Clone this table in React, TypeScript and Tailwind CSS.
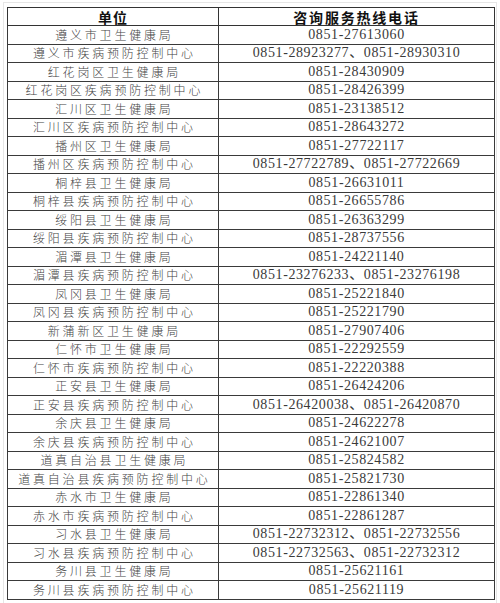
import React from "react";

const rows: [string, string][] = [
  ["遵义市卫生健康局", "0851-27613060"],
  ["遵义市疾病预防控制中心", "0851-28923277、0851-28930310"],
  ["红花岗区卫生健康局", "0851-28430909"],
  ["红花岗区疾病预防控制中心", "0851-28426399"],
  ["汇川区卫生健康局", "0851-23138512"],
  ["汇川区疾病预防控制中心", "0851-28643272"],
  ["播州区卫生健康局", "0851-27722117"],
  ["播州区疾病预防控制中心", "0851-27722789、0851-27722669"],
  ["桐梓县卫生健康局", "0851-26631011"],
  ["桐梓县疾病预防控制中心", "0851-26655786"],
  ["绥阳县卫生健康局", "0851-26363299"],
  ["绥阳县疾病预防控制中心", "0851-28737556"],
  ["湄潭县卫生健康局", "0851-24221140"],
  ["湄潭县疾病预防控制中心", "0851-23276233、0851-23276198"],
  ["凤冈县卫生健康局", "0851-25221840"],
  ["凤冈县疾病预防控制中心", "0851-25221790"],
  ["新蒲新区卫生健康局", "0851-27907406"],
  ["仁怀市卫生健康局", "0851-22292559"],
  ["仁怀市疾病预防控制中心", "0851-22220388"],
  ["正安县卫生健康局", "0851-26424206"],
  ["正安县疾病预防控制中心", "0851-26420038、0851-26420870"],
  ["余庆县卫生健康局", "0851-24622278"],
  ["余庆县疾病预防控制中心", "0851-24621007"],
  ["道真自治县卫生健康局", "0851-25824582"],
  ["道真自治县疾病预防控制中心", "0851-25821730"],
  ["赤水市卫生健康局", "0851-22861340"],
  ["赤水市疾病预防控制中心", "0851-22861287"],
  ["习水县卫生健康局", "0851-22732312、0851-22732556"],
  ["习水县疾病预防控制中心", "0851-22732563、0851-22732312"],
  ["务川县卫生健康局", "0851-25621161"],
  ["务川县疾病预防控制中心", "0851-25621119"],
];

export default function App() {
  return (
    <div className="w-[500px] h-[603px] bg-white px-[3px] pt-[2px] overflow-hidden">
      <div className="h-full border-x border-t border-[#e6e6e6] px-[3px] pt-[4px]">
        <table className="border-collapse w-[487px] table-fixed border-[1.5px] border-[#2a2a2a]">
          <colgroup>
            <col className="w-[211px]" />
            <col className="w-[276px]" />
          </colgroup>
          <thead>
            <tr className="h-[18px]">
              <th className="border border-[#333] p-0 text-center font-bold text-[14px] leading-none text-[#111] tracking-[1px] [font-family:'Noto_Sans_CJK_SC',sans-serif]">
                单位
              </th>
              <th className="border border-[#333] p-0 text-center font-bold text-[14px] leading-none text-[#111] tracking-[1.8px] [font-family:'Noto_Sans_CJK_SC',sans-serif]">
                咨询服务热线电话
              </th>
            </tr>
          </thead>
          <tbody>
            {rows.map(([name, tel], i) => (
              <tr key={i} className="h-[18.5px]">
                <td className="border border-[#3a3a3a] p-0 text-center text-[12px] font-light leading-none text-[#444] tracking-[2.8px] pl-[2.8px] whitespace-nowrap [font-family:'Noto_Sans_CJK_SC',sans-serif]">
                  {name}
                </td>
                <td className="border border-[#3a3a3a] p-0 text-center text-[14px] leading-none text-[#3a3a3a] tracking-[0.6px] whitespace-nowrap [font-family:'Liberation_Serif','Noto_Sans_CJK_SC',serif]">
                  {tel}
                </td>
              </tr>
            ))}
          </tbody>
        </table>
      </div>
    </div>
  );
}
